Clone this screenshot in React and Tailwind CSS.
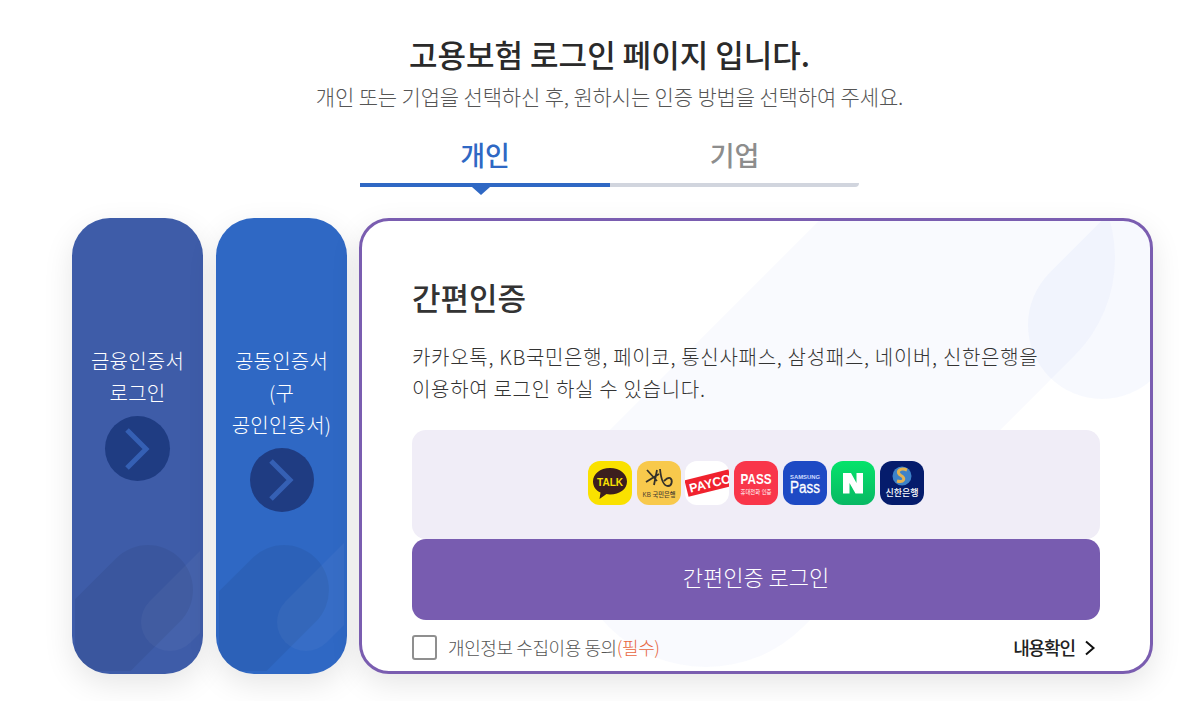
const kr = '[font-family:"Noto_Sans_CJK_KR","Noto_Sans",sans-serif]'

function PanelShapes({ viewBox }) {
  return (
    <svg className="absolute inset-[3px] h-[450px] w-[125px]" viewBox={viewBox} aria-hidden="true">
      <line x1="148" y1="590" x2="0" y2="738" stroke="#000" strokeOpacity="0.06" strokeWidth="90" strokeLinecap="round" />
      <line x1="170" y1="622" x2="300" y2="492" stroke="#fff" strokeOpacity="0.04" strokeWidth="58" strokeLinecap="round" />
    </svg>
  )
}

function SidePanel({ lines, bg, viewBox, circle }) {
  return (
    <div className={`relative flex h-full w-[131px] shrink-0 flex-col items-center overflow-hidden rounded-[38px] pt-[127px] shadow-[0_10px_30px_rgba(0,0,0,0.1)] ${bg}`}>
      <PanelShapes viewBox={viewBox} />
      <div className="relative whitespace-nowrap text-center text-[20px] font-light leading-[32px] tracking-[0.2px] text-white">
        {lines.map((line) => (
          <div key={line}>{line}</div>
        ))}
      </div>
      <div className={`relative mt-[7px] flex items-center justify-center rounded-full bg-[#1f3c82] ${circle}`}>
        <svg width="30" height="44" viewBox="0 0 30 44" fill="none">
          <path d="M4 3 L23 22 L4 41" stroke="#3560b4" strokeWidth="5" />
        </svg>
      </div>
    </div>
  )
}

function Tile({ bg, children }) {
  return (
    <div className={`h-11 w-11 shrink-0 overflow-hidden rounded-[12px] ${bg}`}>
      <svg width="44" height="44" viewBox="0 0 44 44">
        {children}
      </svg>
    </div>
  )
}

function ServiceIcons() {
  const font = '"Liberation Sans", "Noto Sans CJK KR", sans-serif'
  return (
    <div className="flex gap-[4.67px]">
      <Tile bg="bg-[#fae100]">
        <path d="M22 7 C12 7 5 13 5 20.500 C5 25.500 8 29.500 12.500 31.500 L11.500 38 L18.500 33 C19.500 33.300 20.500 33.500 22 33.500 C32 33.500 39 28 39 20.500 C39 13 32 7 22 7 Z" fill="#3c1e1e" />
        <text x="22" y="25" textAnchor="middle" fontSize="11" fontWeight="700" fill="#fae100" fontFamily={font} textLength="26" lengthAdjust="spacingAndGlyphs">TALK</text>
      </Tile>
      <Tile bg="bg-[#f8c94c]">
        <path d="M10 9 L20 20 M20 9 L17 24 M9 21 L22 13 M23 8 C24 18 26 25 31 25 C35 25 36 19 33 17 C31 16 29 18 27 20" stroke="#33302a" strokeWidth="1.800" fill="none" />
        <text x="22" y="36" textAnchor="middle" fontSize="6.500" fontWeight="500" fill="#4a4030" fontFamily={font} textLength="33" lengthAdjust="spacingAndGlyphs">KB 국민은행</text>
      </Tile>
      <Tile bg="bg-white">
        <g transform="rotate(-14 22 23)">
          <rect x="1" y="14" width="54" height="17" fill="#f0222e" />
          <text x="4" y="27.500" fontSize="12.500" fontWeight="700" fill="#fff" fontFamily={font}>PAYCO</text>
        </g>
      </Tile>
      <Tile bg="bg-[#f9364a]">
        <text x="22" y="23" textAnchor="middle" fontSize="15.500" fontWeight="700" fill="#fff" fontFamily={font} textLength="31" lengthAdjust="spacingAndGlyphs">PASS</text>
        <text x="22" y="33" textAnchor="middle" fontSize="6" fill="#fff" fontFamily={font} textLength="31" lengthAdjust="spacingAndGlyphs">휴대전화 인증</text>
      </Tile>
      <Tile bg="bg-[#1e4ac4]">
        <text x="22" y="18" textAnchor="middle" fontSize="5.500" fontWeight="700" fill="#cfdcff" fontFamily={font} textLength="30" lengthAdjust="spacingAndGlyphs">SAMSUNG</text>
        <text x="22" y="32" textAnchor="middle" fontSize="16" fontWeight="400" stroke="#fff" strokeWidth="0.300" fill="#fff" fontFamily={font} textLength="30" lengthAdjust="spacingAndGlyphs">Pass</text>
      </Tile>
      <Tile bg="bg-gradient-to-b from-[#05e36a] to-[#08b864]">
        <path d="M12 12 H20 L25.500 22 V12 H32 V32.500 H24.500 L18.500 22 V32.500 H12 Z" fill="#fff" />
      </Tile>
      <Tile bg="bg-[#051c6c]">
        <circle cx="22" cy="15" r="9.500" fill="#3d82c8" />
        <path d="M27 9 C20 6 15 11 21 14.500 C26 17 24 22 17 20" stroke="#e2b252" strokeWidth="3" fill="none" />
        <text x="22" y="35" textAnchor="middle" fontSize="9" fontWeight="500" fill="#fff" fontFamily={font} textLength="33" lengthAdjust="spacingAndGlyphs">신한은행</text>
      </Tile>
    </div>
  )
}

export default function App() {
  return (
    <div className={`h-[701px] w-[1190px] overflow-hidden bg-white ${kr}`}>
      <div className="w-[1219px] pt-[31px]">
        <h1 className="text-center text-[31px] font-medium leading-[46px] text-[#2a2a2a]">
          고용보험 로그인 페이지 입니다.
        </h1>
        <p className="mt-[3px] text-center text-[21px] font-light leading-[32px] tracking-[-0.15px] text-[#555]">
          개인 또는 기업을 선택하신 후, 원하시는 인증 방법을 선택하여 주세요.
        </p>
      </div>

      <div className="ml-[360px] mt-[15px] flex w-[499px]">
        <div className="relative h-[60px] w-[250px] border-b-[4px] border-[#2f68c4] text-center text-[27px] font-medium leading-[56px] text-[#2f68c4]">
          개인
          <span className="absolute left-[112px] top-[60px] h-0 w-0 border-x-[9px] border-t-[8px] border-x-transparent border-t-[#2f68c4]" />
        </div>
        <div className="h-[60px] w-[249px] rounded-r-sm border-b-[4px] border-[#d1d5de] text-center text-[27px] font-medium leading-[56px] text-[#8d8d8d]">
          기업
        </div>
      </div>

      <div className="ml-[72px] mt-[31px] flex h-[456px] w-[1081px] gap-[13px]">
        <SidePanel
          lines={['금융인증서', '로그인']}
          bg="bg-[#3e5ca8]"
          viewBox="75 221 125 450"
          circle="h-[65px] w-[65px]"
        />
        <SidePanel
          lines={['공동인증서', '(구', '공인인증서)']}
          bg="bg-[#2f68c4]"
          viewBox="83 221 125 450"
          circle="h-[64px] w-[64px]"
        />

        <div className="relative ml-[-1px] h-full flex-1 overflow-hidden rounded-[30px] border-[3px] border-[#7a5db0] bg-white pl-[50px] pr-[50px] shadow-[0_10px_30px_rgba(0,0,0,0.1)]">
          <svg className="absolute inset-0 h-[450px] w-[788px]" viewBox="362 221 788 450" aria-hidden="true">
            <line x1="706" y1="529" x2="977" y2="258" stroke="#5b7cf0" strokeOpacity="0.035" strokeWidth="276" strokeLinecap="round" />
            <line x1="1102" y1="325" x2="1300" y2="127" stroke="#5b8cf0" strokeOpacity="0.05" strokeWidth="148" strokeLinecap="round" />
          </svg>
          <div className="relative">
            <h2 className="pt-[54px] text-[31px] font-medium leading-[44px] text-[#333]">간편인증</h2>
            <p className="mt-[22px] whitespace-nowrap text-[20px] font-light leading-[32px] tracking-[0.7px] text-[#333]">
              카카오톡, KB국민은행, 페이코, 통신사패스, 삼성패스, 네이버, 신한은행을
              <br />
              이용하여 로그인 하실 수 있습니다.
            </p>
            <div className="mt-[25px] flex h-[109px] w-[688px] items-center justify-center rounded-[14px] bg-[#f0edf7] pb-[3px]">
              <ServiceIcons />
            </div>
            <button className="block h-[81px] w-[688px] rounded-[14px] bg-[#785cb0] pb-[7px] text-[22px] font-light text-white">
              간편인증 로그인
            </button>
            <div className="mt-[14px] flex w-[688px] items-center">
              <span className="h-[25px] w-[25px] rounded-[3px] border-2 border-[#8f8f8f] bg-white" />
              <span className="ml-[11px] text-[18px] font-light tracking-[-0.4px] text-[#555]">
                개인정보 수집이용 동의<span className="text-[#e8663e]">(필수)</span>
              </span>
              <span className="ml-auto flex items-center pr-[4px] text-[18px] font-medium tracking-[-1.1px] text-[#222]">
                내용확인
                <svg className="ml-[9px]" width="12" height="16" viewBox="0 0 12 16" fill="none">
                  <path d="M2 1.500 L9.500 8 L2 14.500" stroke="#111" strokeWidth="2" />
                </svg>
              </span>
            </div>
          </div>
        </div>
      </div>
    </div>
  )
}
